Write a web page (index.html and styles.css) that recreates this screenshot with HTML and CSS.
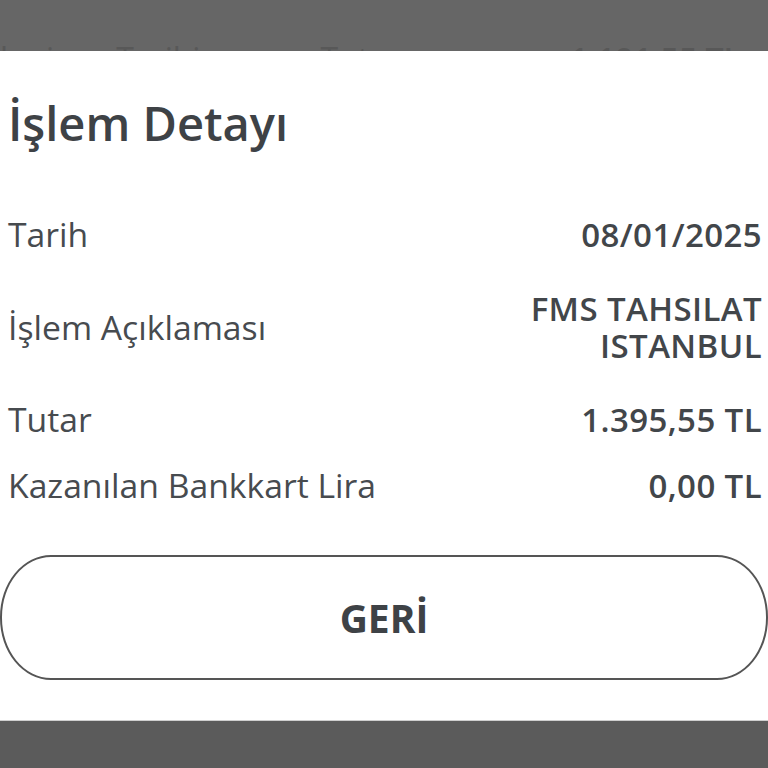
FILE: index.html
```html
<!DOCTYPE html>
<html lang="tr">
<head>
<meta charset="utf-8">
<title>İşlem Detayı</title>
<link rel="stylesheet" href="styles.css">
</head>
<body>
<div class="backdrop-top">
  <div class="ghost-row">
    <span class="ghost-a">l</span>
    <span class="ghost-b">i</span>
    <span class="ghost-c">Tarihi</span>
    <span class="ghost-d">Tutar</span>
    <span class="ghost-e">1.191,55 TL</span>
  </div>
</div>
<main class="modal">
  <h1 class="title">İşlem Detayı</h1>
  <div class="rows">
    <div class="row">
      <span class="label">Tarih</span>
      <span class="value">08/01/2025</span>
    </div>
    <div class="row">
      <span class="label">İşlem Açıklaması</span>
      <span class="value">FMS TAHSILAT<br>ISTANBUL</span>
    </div>
    <div class="row">
      <span class="label">Tutar</span>
      <span class="value">1.395,55 TL</span>
    </div>
    <div class="row row-last">
      <span class="label">Kazanılan Bankkart Lira</span>
      <span class="value">0,00 TL</span>
    </div>
  </div>
  <button class="back-btn" type="button">GERİ</button>
</main>
<div class="backdrop-bottom"></div>
</body>
</html>
```
FILE: styles.css
```css
html, body {
  margin: 0;
  padding: 0;
}
body {
  width: 768px;
  height: 768px;
  overflow: hidden;
  background: #5b5b5b;
  font-family: "Open Sans", "Liberation Sans", sans-serif;
  color: #404448;
}
.backdrop-top {
  height: 51px;
  background: #666666;
  overflow: hidden;
}
.ghost-row {
  display: flex;
  padding-top: 43px;
  font-size: 32px;
  line-height: 32px;
  color: #585858;
  white-space: nowrap;
}
.ghost-a { margin-left: 0; }
.ghost-b { margin-left: 38px; }
.ghost-c { margin-left: 62px; }
.ghost-d { margin-left: 120px; }
.ghost-e { margin-left: 170px; font-weight: 600; }

.modal {
  height: 670px;
  background: #ffffff;
  padding: 42px 6px 0 8px;
  box-sizing: border-box;
  border-bottom: 1px solid #cfcfcf;
  display: flex;
  flex-direction: column;
}
.title {
  margin: 0;
  font-size: 47px;
  line-height: 60px;
  font-weight: 600;
  color: #3e4246;
}
.rows {
  margin-top: 63px;
  display: flex;
  flex-direction: column;
  gap: 37px;
}
.row {
  display: flex;
  justify-content: space-between;
  align-items: center;
  font-size: 33.7px;
  line-height: 37px;
}
.row-last {
  margin-top: -8px;
}
.label {
  font-weight: 400;
  color: #474b4f;
}
.value {
  font-weight: 600;
  font-size: 33px;
  letter-spacing: 0.4px;
  text-align: right;
  color: #42464a;
}
.back-btn {
  margin: 51px 0 0 -8px;
  width: 768px;
  height: 125px;
  border: 2px solid #555555;
  border-radius: 51px / 62px;
  background: #ffffff;
  font-family: "Open Sans", "Liberation Sans", sans-serif;
  font-size: 39px;
  font-weight: 700;
  color: #3e4246;
  padding: 0;
}
.backdrop-bottom {
  height: 47px;
  background: #5b5b5b;
}
```
